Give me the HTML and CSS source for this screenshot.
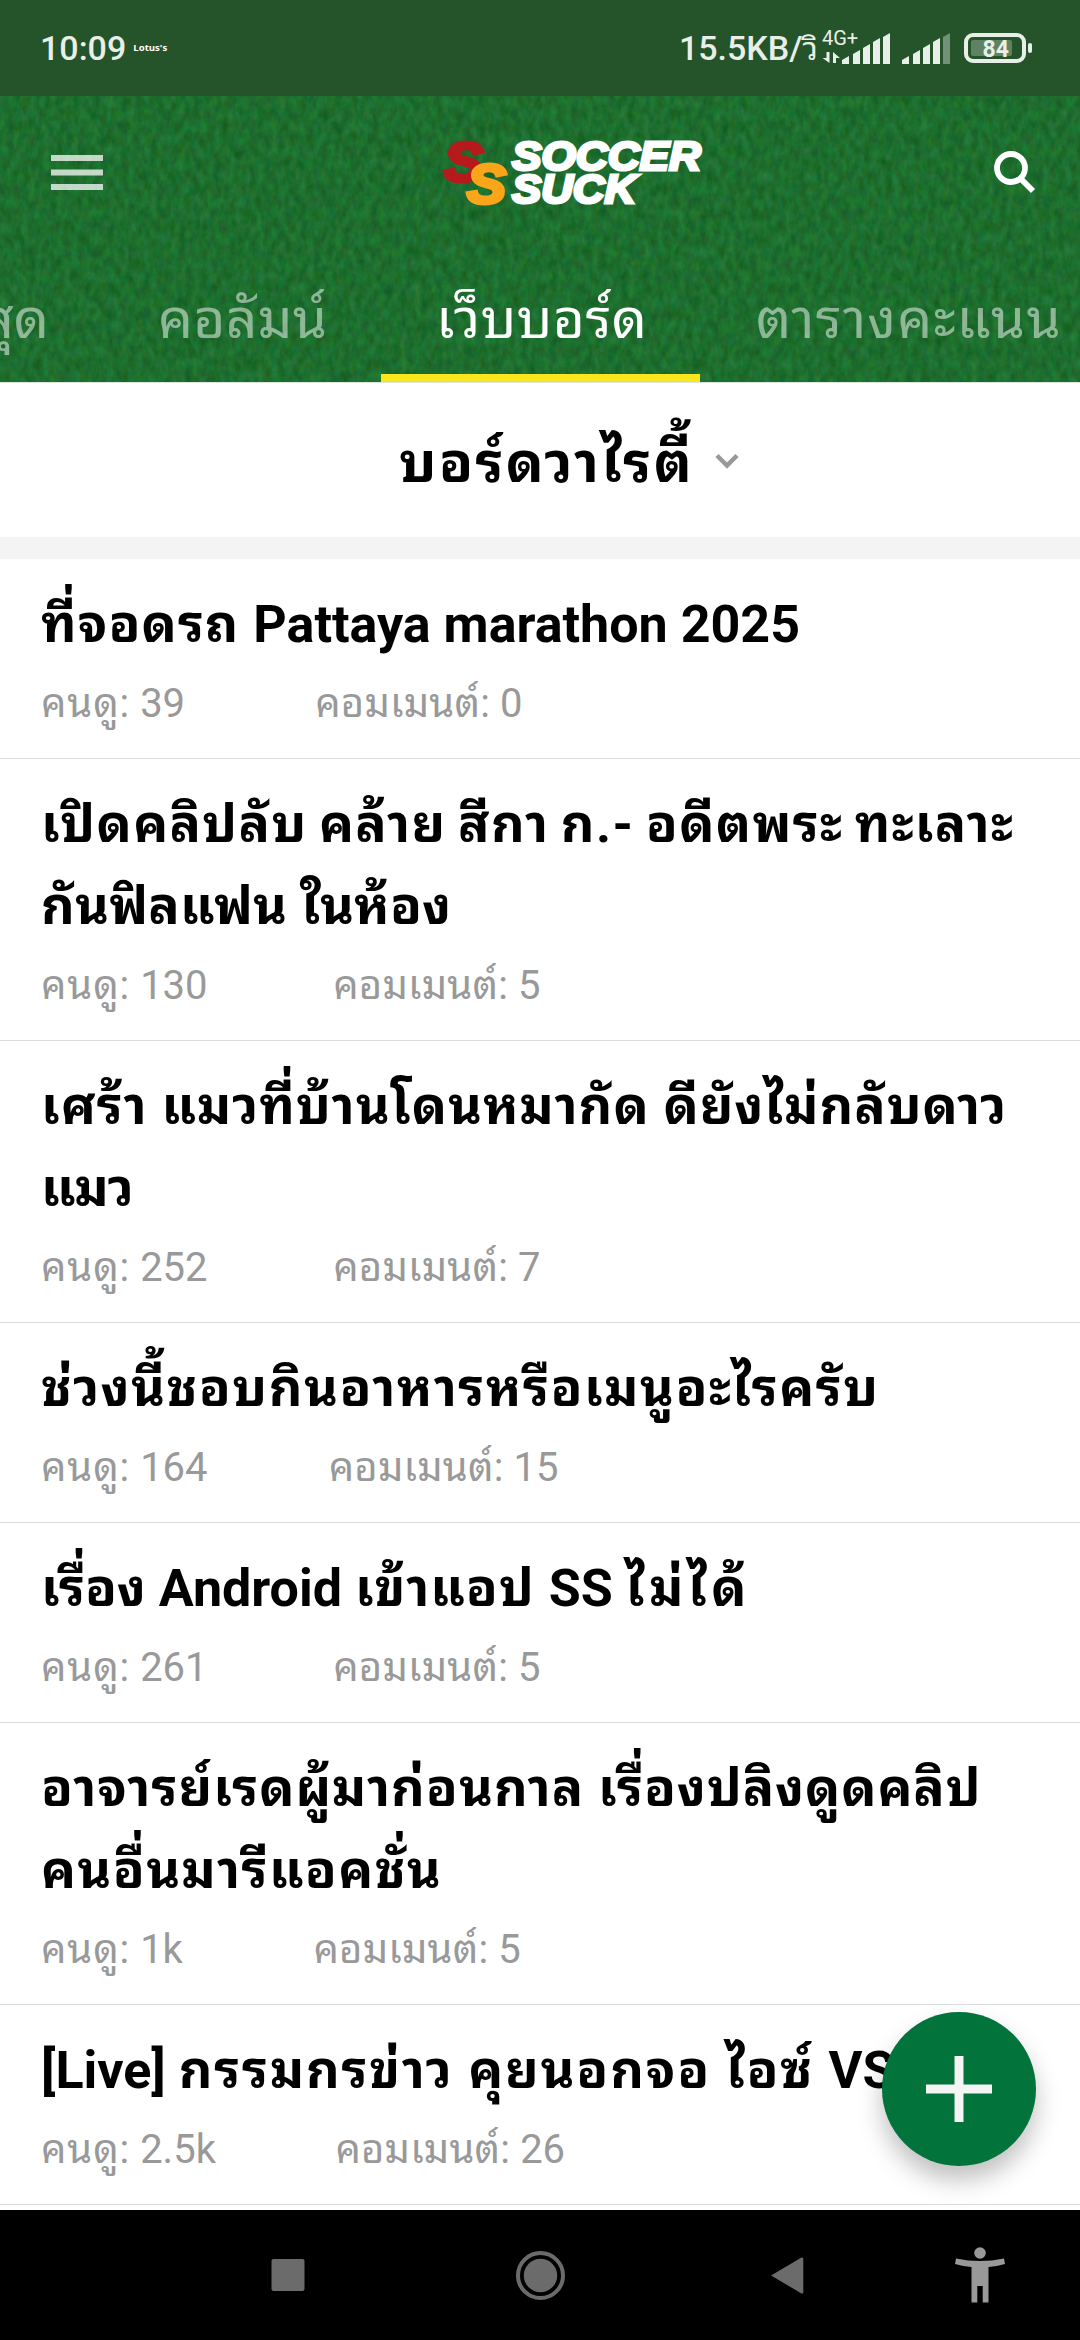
FILE: index.html
```html
<!DOCTYPE html>
<html lang="th">
<head>
<meta charset="utf-8">
<title>Soccersuck</title>
<link rel="stylesheet" href="styles.css">
</head>
<body>
<div class="phone">
  <div class="status">
    <span class="clock">10:09</span>
    <span class="carrier">Lotus's</span>
    <span class="speed">15.5KB/<span class="unit">วิ</span></span>
    <svg class="signals" width="220" height="96" viewBox="820 0 220 96" fill="#e8efe8">
      <text class="net" x="822" y="45">4G+</text>
      <path d="M826.500 52h3v11l-7-5h4zM833 63V52l7 6h-4v5z"/>
      <path d="M842 60l7-4v8h-7zM853 54l7-4v14h-7zM863 48l7-4v20h-7zM873 42l7-4v26h-7zM883 37l7-4v31h-7z"/>
      <path d="M902 60l7-4v8h-7zM913 54l7-4v14h-7zM923 48l7-4v20h-7zM933 42l7-4v26h-7z"/>
      <path d="M943 37l7-4v31h-7z" opacity=".4"/>
      <rect x="966" y="35" width="58" height="26" rx="7" fill="none" stroke="#e8efe8" stroke-width="4"/>
      <rect x="971" y="40" width="41" height="16" rx="2" opacity=".3"/>
      <rect x="1028" y="43" width="4" height="10" rx="2"/>
      <text class="level" x="982.500" y="57">84</text>
    </svg>
  </div>
  <header class="header">
    <svg class="grass" width="1080" height="286">
      <filter id="turf" x="0" y="0" width="100%" height="100%" color-interpolation-filters="sRGB">
        <feTurbulence type="fractalNoise" baseFrequency="0.14 0.08" numOctaves="4" seed="4"/>
        <feColorMatrix values="0.11 0.05 0 0 0.035  0 0.18 0 0 0.34  0 0.1 0.12 0 0.07  0 0 0 0 1"/>
      </filter>
      <rect width="1080" height="154" filter="url(#turf)"/>
      <rect y="154" width="1080" height="132" filter="url(#turf)"/>
    </svg>
    <div class="topbar">
      <svg width="52" height="36" viewBox="0 0 52 36" fill="#fff" opacity=".74"><path d="M0 0h52v6H0zM0 14.500h52v6H0zM0 29h52v6H0z"/></svg>
      <svg class="logo" width="270" height="76" viewBox="0 0 270 76">
        <text class="badge" x="3" y="46" textLength="39" lengthAdjust="spacingAndGlyphs" fill="#b71a1c" stroke="#b71a1c">S</text>
        <text class="badge" x="26" y="68" textLength="39" lengthAdjust="spacingAndGlyphs" fill="#faa51a" stroke="#faa51a">S</text>
        <text class="word" x="71" y="35" textLength="189" lengthAdjust="spacingAndGlyphs">SOCCER</text>
        <text class="word" x="71" y="68" textLength="124" lengthAdjust="spacingAndGlyphs">SUCK</text>
      </svg>
      <svg width="42" height="44" viewBox="0 0 42 44" fill="none" stroke="#fff" stroke-width="5.800"><circle cx="17" cy="17" r="14"/><path d="M26.500 27.500l12.500 12.500"/></svg>
    </div>
    <nav class="tabs">
      <a class="tab latest">ล่าสุด</a>
      <a class="tab column">คอลัมน์</a>
      <a class="tab active">เว็บบอร์ด</a>
      <a class="tab table">ตารางคะแนน</a>
    </nav>
  </header>
  <div class="board">
    <span>บอร์ดวาไรตี้</span>
    <svg width="24" height="16" viewBox="0 0 24 16" fill="none" stroke="#999" stroke-width="4.500"><path d="M2 2.500l10 10 10-10"/></svg>
  </div>
  <ul class="topics">
    <li><h2><span class="t1">ที่จอดรถ </span>Pattaya marathon 2025</h2><p><span><i>คนดู:</i> 39</span><span><b>คอมเมนต์:</b> 0</span></p></li>
    <li><h2><span class="t2">เปิดคลิปลับ คล้าย สีกา ก.- อดีตพระ ทะเลาะ</span><br><span class="t3">กันฟิลแฟน ในห้อง</span></h2><p><span><i>คนดู:</i> 130</span><span><b>คอมเมนต์:</b> 5</span></p></li>
    <li><h2><span class="t4">เศร้า แมวที่บ้านโดนหมากัด ดียังไม่กลับดาว</span><br><span class="t5">แมว</span></h2><p><span><i>คนดู:</i> 252</span><span><b>คอมเมนต์:</b> 7</span></p></li>
    <li><h2><span class="t6">ช่วงนี้ชอบกินอาหารหรือเมนูอะไรครับ</span></h2><p><span><i>คนดู:</i> 164</span><span><b>คอมเมนต์:</b> 15</span></p></li>
    <li><h2><span class="t7">เรื่อง </span>Android <span class="t8">เข้าแอป </span>SS <span class="t9">ไม่ได้</span></h2><p><span><i>คนดู:</i> 261</span><span><b>คอมเมนต์:</b> 5</span></p></li>
    <li><h2><span class="t10">อาจารย์เรดผู้มาก่อนกาล เรื่องปลิงดูดคลิป</span><br><span class="t11">คนอื่นมารีแอคชั่น</span></h2><p><span><i>คนดู:</i> 1k</span><span><b>คอมเมนต์:</b> 5</span></p></li>
    <li><h2>[Live] <span class="t12">กรรมกรข่าว คุยนอกจอ ไอซ์ </span>VS</h2><p><span><i>คนดู:</i> 2.5k</span><span><b>คอมเมนต์:</b> 26</span></p></li>
  </ul>
  <button class="fab" aria-label="+"><svg width="66" height="66" viewBox="0 0 66 66" fill="#f4f4f4"><path d="M28.500 0h9v28.500h28.500v9H37.500v28.500h-9V37.500H0v-9h28.500z"/></svg></button>
  <div class="navbar">
    <svg width="1080" height="130" viewBox="0 2210 1080 130" fill="#6b6b6b">
      <rect x="271.500" y="2259" width="33" height="32" rx="2"/>
      <circle cx="540.500" cy="2275.500" r="22.500" fill="none" stroke="#6b6b6b" stroke-width="4"/>
      <circle cx="540.500" cy="2275.500" r="16.700"/>
      <path d="M771 2275.500L801.500 2257.500Q803.300 2257 803.300 2259V2292Q803.300 2294 801.500 2293.500Z"/>
      <g fill="#999"><circle cx="980" cy="2253" r="5.800"/><path d="M956 2258.500Q980 2263.500 1004 2258.500L1005 2264Q997 2266.500 988.500 2267V2302.500H982.700V2286H977.300V2302.500H971.500V2267Q963 2266.500 955 2264Z"/></g>
    </svg>
  </div>
</div>
</body>
</html>
```
FILE: styles.css
```css
* { box-sizing: border-box; margin: 0; padding: 0; }
body { font-family: Roboto, "Noto Sans Thai Looped", "Noto Sans Thai", "Noto Sans", sans-serif; background: #fff; }
.phone { position: relative; width: 1080px; height: 2340px; overflow: hidden; display: flex; flex-direction: column; }

.status { height: 96px; flex: none; background: #25532a; color: #e8efe8; display: flex; align-items: center; padding: 0 40px; font-size: 34px; font-weight: 500; line-height: 96px; }
.carrier { font-family: "Open Sans", sans-serif; font-size: 9.6px; font-weight: 700; margin-left: 7px; color: #fff; }
.speed { margin-left: auto; margin-right: 2px; }
.unit { font-size: 32px; font-weight: 400; }
.net { font: 400 20px Roboto, sans-serif; }
.level { font: 700 23px Roboto, sans-serif; }

.header { position: relative; height: 286px; flex: none; overflow: hidden; }
.grass { position: absolute; left: 0; top: 0; }
.topbar { position: relative; height: 154px; padding: 0 44px 0 51px; display: flex; justify-content: space-between; align-items: center; }
.logo { margin-left: 54px; overflow: visible; }
.badge { font: italic 700 55px "Liberation Sans", sans-serif; stroke-width: 4; }
.word { font: italic 700 41px "Liberation Sans", sans-serif; fill: #fff; stroke: #fff; stroke-width: 3; }

.tabs { position: relative; display: flex; height: 132px; }
.tab { flex: none; height: 132px; line-height: 139px; padding-left: 56px; font-size: 55px; color: rgba(255,255,255,.5); white-space: nowrap; }
.latest { width: 300px; margin-left: -198px; padding: 0 53px 0 0; text-align: right; }
.column { width: 279px; letter-spacing: .3px; }
.active { width: 319px; padding-left: 55px; color: #fff; border-bottom: 8px solid #f9e61e; letter-spacing: .5px; }
.table { width: 417px; letter-spacing: 1.3px; }

.board { height: 177px; flex: none; border-top: 1px solid #dbe6dc; border-bottom: 22px solid #f4f4f4; display: flex; padding-left: 399px; gap: 21px; font-size: 56px; font-weight: 700; line-height: 160px; }
.board span { letter-spacing: 2.3px; }
.board svg { margin-top: 70px; }

.topics { list-style: none; }
.topics li { padding: 25px 41px 0; height: 200px; border-bottom: 1px solid #dcdcdc; }
.topics li:has(br) { height: 282px; }
h2 { font-size: 52px; font-weight: 700; line-height: 82px; white-space: nowrap; color: #000; }
p { width: 1002px; height: 76px; font-size: 40px; line-height: 76px; color: #999; display: flex; }
p::before, p::after { content: ""; flex: 1; order: 1; }
p::after { flex: 4; order: 3; }
p span:last-child { order: 2; }
i { font-style: normal; letter-spacing: .9px; }
b { font-weight: 400; letter-spacing: .2px; }
.t1 { letter-spacing: 1.1px; }
.t2 { letter-spacing: 1.4px; word-spacing: -3px; }
.t3 { letter-spacing: .2px; }
.t4 { letter-spacing: 1px; }
.t5 { letter-spacing: -1px; }
.t6 { letter-spacing: 1.5px; }
.t7 { letter-spacing: 0; }
.t8 { letter-spacing: 1px; }
.t9 { letter-spacing: 4.5px; }
.t10 { letter-spacing: 1px; }
.t11 { letter-spacing: 1.4px; }
.t12 { letter-spacing: 1.8px; }

.fab { position: absolute; left: 882px; top: 2012px; width: 154px; height: 154px; border: 0; border-radius: 50%; background: #02733a; box-shadow: 0 14px 24px rgba(0,0,0,.25); display: flex; align-items: center; justify-content: center; }
.navbar { position: absolute; left: 0; bottom: 0; width: 1080px; height: 130px; background: #000; }
.navbar svg { display: block; }
```
